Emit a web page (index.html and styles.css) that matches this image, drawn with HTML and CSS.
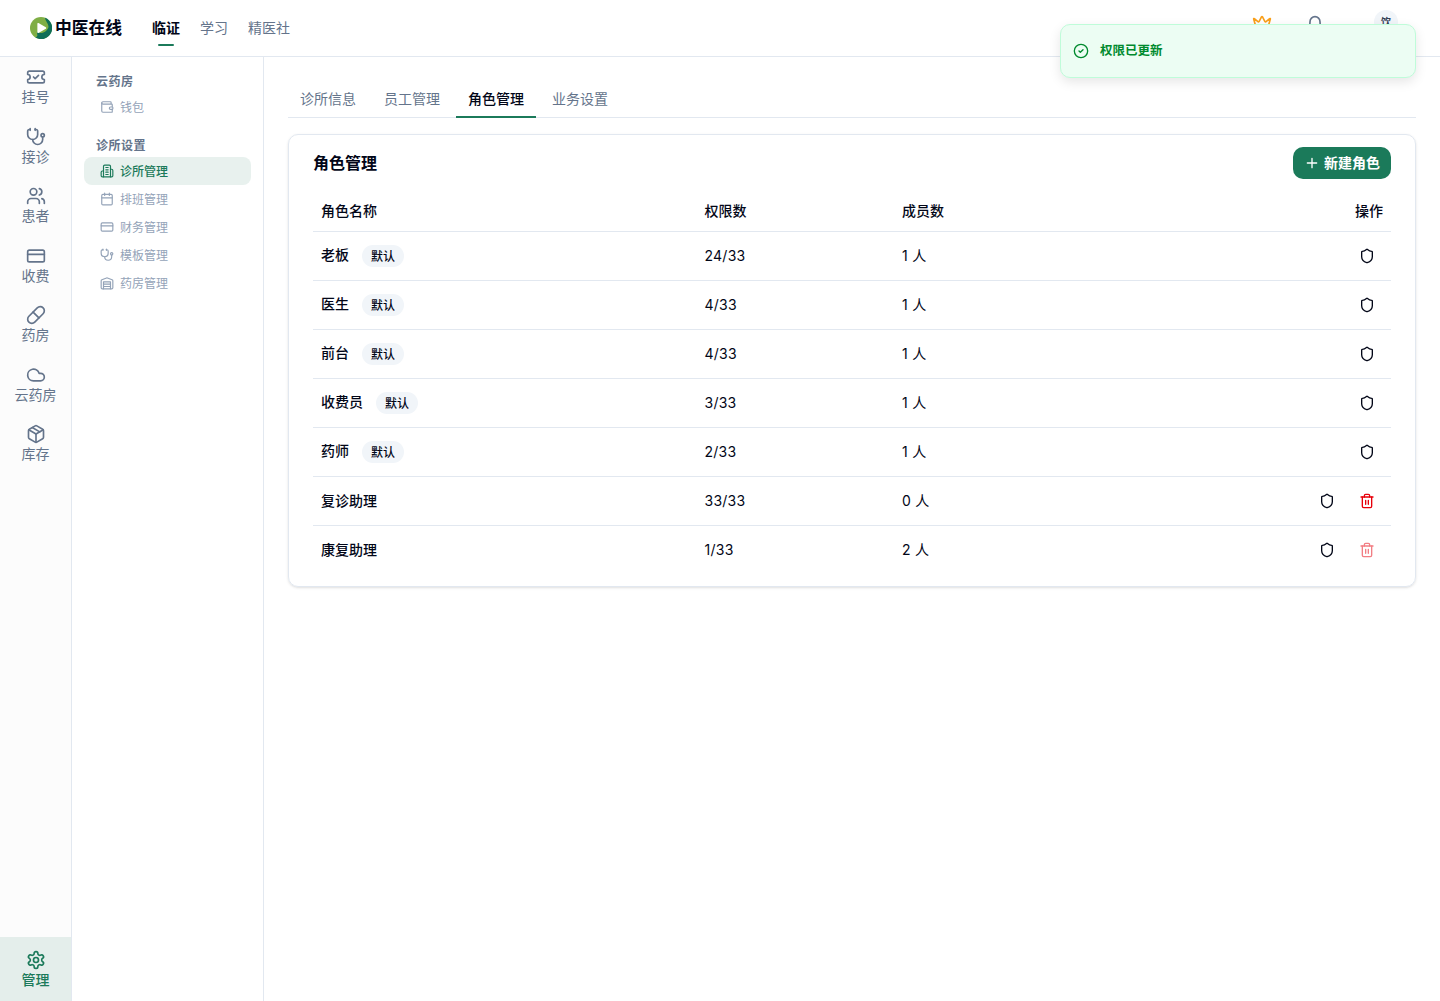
FILE: index.html
```html
<!DOCTYPE html>
<html lang="zh-CN">
<head>
<meta charset="utf-8">
<title>角色管理 - 中医在线</title>
<link rel="stylesheet" href="styles.css">
</head>
<body>
<svg class="sprite" aria-hidden="true">
  <symbol id="ticket" viewBox="0 0 24 24"><path d="M2 9a3 3 0 0 1 0 6v2a2 2 0 0 0 2 2h16a2 2 0 0 0 2-2v-2a3 3 0 0 1 0-6V7a2 2 0 0 0-2-2H4a2 2 0 0 0-2 2Z"/><path d="m9 12 2 2 4-4"/></symbol>
  <symbol id="stethoscope" viewBox="0 0 24 24"><path d="M11 2v2"/><path d="M5 2v2"/><path d="M5 3H4a2 2 0 0 0-2 2v4a6 6 0 0 0 12 0V5a2 2 0 0 0-2-2h-1"/><path d="M8 15a6 6 0 0 0 12 0v-3"/><circle cx="20" cy="10" r="2"/></symbol>
  <symbol id="users" viewBox="0 0 24 24"><path d="M16 21v-2a4 4 0 0 0-4-4H6a4 4 0 0 0-4 4v2"/><circle cx="9" cy="7" r="4"/><path d="M22 21v-2a4 4 0 0 0-3-3.87"/><path d="M16 3.13a4 4 0 0 1 0 7.75"/></symbol>
  <symbol id="card" viewBox="0 0 24 24"><rect width="20" height="14" x="2" y="5" rx="2"/><path d="M2 10h20"/></symbol>
  <symbol id="pill" viewBox="0 0 24 24"><path d="m10.5 20.5 10-10a4.95 4.95 0 1 0-7-7l-10 10a4.95 4.95 0 1 0 7 7Z"/><path d="m8.5 8.5 7 7"/></symbol>
  <symbol id="cloud" viewBox="0 0 24 24"><path d="M17.5 19H9a7 7 0 1 1 6.71-9h1.79a4.5 4.5 0 1 1 0 9Z"/></symbol>
  <symbol id="package" viewBox="0 0 24 24"><path d="M11 21.73a2 2 0 0 0 2 0l7-4A2 2 0 0 0 21 16V8a2 2 0 0 0-1-1.73l-7-4a2 2 0 0 0-2 0l-7 4A2 2 0 0 0 3 8v8a2 2 0 0 0 1 1.73z"/><path d="M12 22V12"/><path d="m3.3 7 8.7 5 8.7-5"/><path d="m7.5 4.27 9 5.15"/></symbol>
  <symbol id="settings" viewBox="0 0 24 24"><path d="M12.22 2h-.44a2 2 0 0 0-2 2v.18a2 2 0 0 1-1 1.73l-.43.25a2 2 0 0 1-2 0l-.15-.08a2 2 0 0 0-2.73.73l-.22.38a2 2 0 0 0 .73 2.73l.15.1a2 2 0 0 1 1 1.72v.51a2 2 0 0 1-1 1.74l-.15.09a2 2 0 0 0-.73 2.73l.22.38a2 2 0 0 0 2.73.73l.15-.08a2 2 0 0 1 2 0l.43.25a2 2 0 0 1 1 1.73V20a2 2 0 0 0 2 2h.44a2 2 0 0 0 2-2v-.18a2 2 0 0 1 1-1.73l.43-.25a2 2 0 0 1 2 0l.15.08a2 2 0 0 0 2.73-.73l.22-.39a2 2 0 0 0-.73-2.73l-.15-.08a2 2 0 0 1-1-1.74v-.5a2 2 0 0 1 1-1.74l.15-.09a2 2 0 0 0 .73-2.73l-.22-.38a2 2 0 0 0-2.73-.73l-.15.08a2 2 0 0 1-2 0l-.43-.25a2 2 0 0 1-1-1.73V4a2 2 0 0 0-2-2z"/><circle cx="12" cy="12" r="3"/></symbol>
  <symbol id="wallet" viewBox="0 0 24 24"><path d="M19 7V4a1 1 0 0 0-1-1H5a2 2 0 0 0 0 4h15a1 1 0 0 1 1 1v4h-3a2 2 0 0 0 0 4h3a1 1 0 0 0 1-1v-2a1 1 0 0 0-1-1"/><path d="M3 5v14a2 2 0 0 0 2 2h15a1 1 0 0 0 1-1v-4"/></symbol>
  <symbol id="building" viewBox="0 0 24 24"><path d="M6 22V4a2 2 0 0 1 2-2h8a2 2 0 0 1 2 2v18Z"/><path d="M6 12H4a2 2 0 0 0-2 2v6a2 2 0 0 0 2 2h2"/><path d="M18 9h2a2 2 0 0 1 2 2v9a2 2 0 0 1-2 2h-2"/><path d="M10 6h4M10 10h4M10 14h4M10 18h4"/></symbol>
  <symbol id="calendar" viewBox="0 0 24 24"><path d="M8 2v4M16 2v4"/><rect width="18" height="18" x="3" y="4" rx="2"/><path d="M3 10h18"/></symbol>
  <symbol id="warehouse" viewBox="0 0 24 24"><path d="M22 8.35V20a2 2 0 0 1-2 2H4a2 2 0 0 1-2-2V8.35A2 2 0 0 1 3.26 6.5l8-3.2a2 2 0 0 1 1.48 0l8 3.2A2 2 0 0 1 22 8.35Z"/><path d="M6 18h12M6 14h12"/><path d="M6 22V10h12v12"/></symbol>
  <symbol id="shield" viewBox="0 0 24 24"><path d="M20 13c0 5-3.5 7.5-7.66 8.95a1 1 0 0 1-.67-.01C7.5 20.5 4 18 4 13V6a1 1 0 0 1 1-1c2 0 4.5-1.2 6.24-2.72a1.17 1.17 0 0 1 1.52 0C14.51 3.81 17 5 19 5a1 1 0 0 1 1 1z"/></symbol>
  <symbol id="trash" viewBox="0 0 24 24"><path d="M3 6h18"/><path d="M19 6v14c0 1-1 2-2 2H7c-1 0-2-1-2-2V6"/><path d="M8 6V4c0-1 1-2 2-2h4c1 0 2 1 2 2v2"/><path d="M10 11v6M14 11v6"/></symbol>
  <symbol id="plus" viewBox="0 0 24 24"><path d="M5 12h14M12 5v14"/></symbol>
  <symbol id="check" viewBox="0 0 24 24"><circle cx="12" cy="12" r="10"/><path d="m9 12 2 2 4-4"/></symbol>
  <symbol id="crown" viewBox="0 0 24 24"><path d="M11.562 3.266a.5.5 0 0 1 .876 0L15.39 8.87a1 1 0 0 0 1.516.294L21.183 5.5a.5.5 0 0 1 .798.519l-2.834 10.246a1 1 0 0 1-.956.734H5.81a1 1 0 0 1-.957-.734L2.02 6.02a.5.5 0 0 1 .798-.519l4.276 3.664a1 1 0 0 0 1.516-.294z"/><path d="M5 21h14"/></symbol>
  <symbol id="bell" viewBox="0 0 24 24"><path d="M6 8a6 6 0 0 1 12 0c0 7 3 9 3 9H3s3-2 3-9"/><path d="M10.3 21a1.94 1.94 0 0 0 3.4 0"/></symbol>
</svg>

<header class="topbar">
  <div class="brand">
    <svg class="logo" viewBox="0 0 22 22"><circle cx="11" cy="11" r="11" fill="#7fae45"/><path d="M15 .8A11 11 0 1 1 5.200 20.350C8.500 20 7 17.500 7 15C12 18 17.500 14 18.500 10C18.500 6.500 15.500 4.500 15 .8Z" fill="#0f6e57"/><path d="M7.400 6.700v8.600q0 1.200 1.100.6l7.300-4.200q1.100-.7 0-1.400L8.500 6.100q-1.100-.6-1.100.6Z" fill="#fff"/></svg>
    <span class="brand-name">中医在线</span>
  </div>
  <nav class="topnav">
    <a class="active">临证</a><a>学习</a><a>精医社</a>
  </nav>
  <div class="tools">
    <svg class="icon crown"><use href="#crown"/></svg>
    <svg class="icon bell"><use href="#bell"/></svg>
    <span class="avatar">饮</span>
  </div>
</header>

<div class="shell">
  <aside class="rail">
    <a><svg class="icon"><use href="#ticket"/></svg>挂号</a>
    <a><svg class="icon"><use href="#stethoscope"/></svg>接诊</a>
    <a><svg class="icon"><use href="#users"/></svg>患者</a>
    <a><svg class="icon"><use href="#card"/></svg>收费</a>
    <a><svg class="icon"><use href="#pill"/></svg>药房</a>
    <a><svg class="icon"><use href="#cloud"/></svg>云药房</a>
    <a><svg class="icon"><use href="#package"/></svg>库存</a>
    <a class="current"><svg class="icon"><use href="#settings"/></svg>管理</a>
  </aside>

  <aside class="submenu">
    <section>
      <h3>云药房</h3>
      <a><svg class="icon"><use href="#wallet"/></svg><span>钱包</span></a>
    </section>
    <section>
      <h3>诊所设置</h3>
      <a class="current"><svg class="icon"><use href="#building"/></svg><span>诊所管理</span></a>
      <a><svg class="icon"><use href="#calendar"/></svg><span>排班管理</span></a>
      <a><svg class="icon"><use href="#card"/></svg><span>财务管理</span></a>
      <a><svg class="icon"><use href="#stethoscope"/></svg><span>模板管理</span></a>
      <a><svg class="icon"><use href="#warehouse"/></svg><span>药房管理</span></a>
    </section>
  </aside>

  <main class="content">
    <nav class="tabs">
      <a>诊所信息</a><a>员工管理</a><a class="active">角色管理</a><a>业务设置</a>
    </nav>
    <section class="card">
      <div class="card-head">
        <h2>角色管理</h2>
        <button class="primary"><svg class="icon"><use href="#plus"/></svg>新建角色</button>
      </div>
      <table>
        <colgroup><col class="c-name"><col class="c-perm"><col class="c-member"><col></colgroup>
        <thead><tr><th>角色名称</th><th>权限数</th><th>成员数</th><th class="right">操作</th></tr></thead>
        <tbody>
          <tr><td><div class="role"><span class="preset">老板</span><span class="badge">默认</span></div></td><td>24/33</td><td>1 人</td><td><div class="actions"><i><svg class="icon"><use href="#shield"/></svg></i></div></td></tr>
          <tr><td><div class="role"><span class="preset">医生</span><span class="badge">默认</span></div></td><td>4/33</td><td>1 人</td><td><div class="actions"><i><svg class="icon"><use href="#shield"/></svg></i></div></td></tr>
          <tr><td><div class="role"><span class="preset">前台</span><span class="badge">默认</span></div></td><td>4/33</td><td>1 人</td><td><div class="actions"><i><svg class="icon"><use href="#shield"/></svg></i></div></td></tr>
          <tr><td><div class="role"><span class="preset">收费员</span><span class="badge">默认</span></div></td><td>3/33</td><td>1 人</td><td><div class="actions"><i><svg class="icon"><use href="#shield"/></svg></i></div></td></tr>
          <tr><td><div class="role"><span class="preset">药师</span><span class="badge">默认</span></div></td><td>2/33</td><td>1 人</td><td><div class="actions"><i><svg class="icon"><use href="#shield"/></svg></i></div></td></tr>
          <tr><td><div class="role">复诊助理</div></td><td>33/33</td><td>0 人</td><td><div class="actions"><i><svg class="icon"><use href="#shield"/></svg></i><i class="danger"><svg class="icon"><use href="#trash"/></svg></i></div></td></tr>
          <tr><td><div class="role">康复助理</div></td><td>1/33</td><td>2 人</td><td><div class="actions"><i><svg class="icon"><use href="#shield"/></svg></i><i class="danger disabled"><svg class="icon"><use href="#trash"/></svg></i></div></td></tr>
        </tbody>
      </table>
    </section>
  </main>
</div>

<div class="toast"><svg class="icon"><use href="#check"/></svg><span>权限已更新</span></div>
</body>
</html>
```
FILE: styles.css
```css
* { box-sizing: border-box; }

body {
  margin: 0;
  height: 1001px;
  display: flex;
  flex-direction: column;
  overflow: hidden;
  background: #fff;
  color: #020617;
  font: 14px/20px Inter, "Noto Sans CJK SC", sans-serif;
}

.sprite { position: absolute; width: 0; height: 0; }

.icon {
  width: 16px;
  height: 16px;
  flex: none;
  fill: none;
  stroke: currentColor;
  stroke-width: 2;
  stroke-linecap: round;
  stroke-linejoin: round;
}

/* top bar */
.topbar {
  height: 57px;
  flex: none;
  display: flex;
  align-items: center;
  padding-left: 30px;
  border-bottom: 1px solid #e2e8f0;
}
.brand { display: flex; align-items: center; gap: 3px; width: 122px; }
.logo { width: 22px; height: 22px; }
.brand-name { font-size: 16.8px; font-weight: 600; line-height: 24px; white-space: nowrap; }
.topnav { display: flex; gap: 20px; height: 56px; }
.topnav a {
  display: flex;
  flex-direction: column;
  align-items: center;
  padding-top: 18px;
  color: #64748b;
}
.topnav .active { color: #020617; font-weight: 600; }
.topnav .active::after {
  content: "";
  width: 16px;
  height: 2px;
  margin-top: 6px;
  border-radius: 1px;
  background: #1b7a5a;
}
.tools {
  display: flex;
  align-items: flex-start;
  height: 56px;
  margin-left: auto;
  padding: 10px 42px 0 0;
}
.tools .icon { width: 20px; height: 20px; }
.crown { margin: 4px 32.5px 0 0; color: #f9a01b; }
.bell { margin: 5px 49.5px 0 0; color: #64748b; }
.avatar {
  width: 24px;
  height: 24px;
  border-radius: 50%;
  background: #f1f5f9;
  color: #334155;
  font-size: 10px;
  font-weight: 600;
  line-height: 25px;
  text-align: center;
}

.shell { flex: 1; display: flex; min-height: 0; }

/* icon rail */
.rail {
  width: 72px;
  flex: none;
  display: flex;
  flex-direction: column;
  border-right: 1px solid #e2e8f0;
  background: #fcfcfc;
}
.rail a {
  height: 59.5px;
  display: flex;
  flex-direction: column;
  align-items: center;
  padding-top: 10px;
  color: #64748b;
}
.rail .icon { width: 20px; height: 20px; }
.rail .current {
  height: 64px;
  margin-top: auto;
  padding-top: 13px;
  background: #e4eeeb;
  color: #1b7a5a;
  font-weight: 500;
}

/* secondary menu */
.submenu {
  width: 192px;
  flex: none;
  display: flex;
  flex-direction: column;
  gap: 12px;
  padding: 12px;
  border-right: 1px solid #e2e8f0;
}
.submenu h3 {
  height: 24px;
  margin: 0;
  padding-left: 12px;
  color: #64748b;
  font-size: 12px;
  font-weight: 600;
  line-height: 25px;
  letter-spacing: 0.5px;
}
.submenu a {
  height: 28px;
  display: flex;
  align-items: center;
  gap: 6px;
  padding-left: 16px;
  border-radius: 8px;
  color: #94a3b8;
  font-size: 12px;
}
.submenu span { padding-top: 1px; }
.submenu .icon { width: 14px; height: 14px; }
.submenu .current { background: #e8f1ee; color: #1b7a5a; font-weight: 500; }

/* content */
.content { flex: 1; padding: 24px; }
.tabs {
  display: flex;
  gap: 4px;
  height: 37px;
  border-bottom: 1px solid #e2e8f0;
}
.tabs a {
  height: 37px;
  padding: 8px 12px 0;
  border-bottom: 2px solid transparent;
  color: #64748b;
}
.tabs .active { border-color: #1b7a5a; color: #020617; font-weight: 500; }

.card {
  margin-top: 16px;
  padding: 12px 24px;
  border: 1px solid #e2e8f0;
  border-radius: 10px;
  box-shadow: 0 1px 3px rgba(0, 0, 0, 0.1), 0 1px 2px -1px rgba(0, 0, 0, 0.1);
}
.card-head { display: flex; align-items: center; justify-content: space-between; margin-bottom: 12px; }
.card h2 { margin: 0; font-size: 16px; font-weight: 600; line-height: 24px; }
.primary {
  height: 32px;
  display: flex;
  align-items: center;
  gap: 4px;
  padding: 0 11px;
  border: 0;
  border-radius: 10px;
  background: #1b7a5a;
  color: #fff;
  font: inherit;
  font-weight: 600;
}

table { width: 100%; table-layout: fixed; border-collapse: separate; border-spacing: 0; }
.c-name { width: 383.500px; }
.c-perm { width: 197.500px; }
.c-member { width: 302px; }
th { height: 41px; padding: 0 8px; border-bottom: 1px solid #e2e8f0; font-weight: 500; text-align: left; }
.right { text-align: right; }
td { height: 49px; padding: 0 8px; border-bottom: 1px solid #e2e8f0; }
td:nth-child(2), td:nth-child(3) { letter-spacing: 0.25px; }
tbody tr:last-child td { border-bottom: 0; height: 48px; }
.role { display: flex; align-items: center; gap: 13px; font-weight: 500; }
.preset { padding-bottom: 2px; }
.badge {
  height: 22px;
  padding: 0 9px;
  border-radius: 11px;
  background: #f1f5f9;
  font-size: 12px;
  line-height: 23px;
}
.actions { display: flex; justify-content: flex-end; gap: 8px; }
.actions i { width: 32px; height: 32px; display: grid; place-items: center; }
.danger { color: #e7000b; }
.disabled { opacity: 0.5; }

/* notification */
.toast {
  position: absolute;
  top: 24px;
  right: 24px;
  width: 356px;
  height: 54px;
  display: flex;
  align-items: center;
  gap: 11px;
  padding-left: 12px;
  border: 1px solid #bffcd9;
  border-radius: 10px;
  background: #ecfdf3;
  box-shadow: 0 4px 12px rgba(0, 0, 0, 0.1);
  color: #008a2e;
  font-size: 12.5px;
  font-weight: 600;
}
```
